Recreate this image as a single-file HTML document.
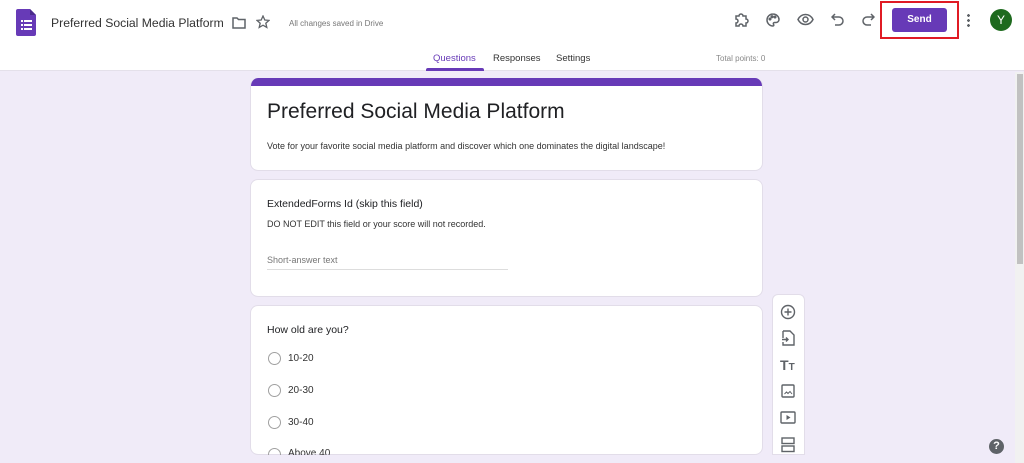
<!DOCTYPE html>
<html><head><style>
*{box-sizing:border-box;margin:0;padding:0}
body{width:1024px;height:463px;overflow:hidden;background:#f0ebf8;font-family:"Liberation Sans",sans-serif;position:relative;color:#202124}
.hdr{position:absolute;left:0;top:0;width:1024px;height:71px;background:#fff;border-bottom:1px solid #e4e0ea}
.abs{position:absolute}
.card{position:absolute;left:250px;width:513px;background:#fff;border-radius:8px;border:1px solid #e2dde9}
.ic{position:absolute;stroke:#5f6368;fill:none;stroke-width:1.8}
.radio{position:absolute;left:17px;width:13px;height:13px;border:1.5px solid #a0a0a0;border-radius:50%}
.opt{position:absolute;left:37px;font-size:10px;color:#333}
</style></head><body>
<div class="hdr">
 <svg class="abs" style="left:16px;top:9px" width="20" height="27" viewBox="0 0 20 27"><path d="M2 0H14L20 6V25a2 2 0 0 1-2 2H2a2 2 0 0 1-2-2V2a2 2 0 0 1 2-2z" fill="#673ab7"/><path d="M14 0V6H20z" fill="#4a2a8c"/><g fill="#fff"><rect x="5" y="11" width="2" height="2"/><rect x="8" y="11" width="8" height="2"/><rect x="5" y="15" width="2" height="2"/><rect x="8" y="15" width="8" height="2"/><rect x="5" y="19" width="2" height="2"/><rect x="8" y="19" width="8" height="2"/></g></svg>
 <div class="abs" style="left:51px;top:16px;font-size:12.2px;color:#333">Preferred Social Media Platform</div>
 <svg class="ic" style="left:232px;top:17px;stroke-width:1.5" width="14" height="12" viewBox="0 0 14 12"><path d="M1 1h4l1.5 1.5H13V11H1z"/></svg>
 <svg class="ic" style="left:256px;top:15px;stroke-width:1.3" width="14" height="14" viewBox="0 0 14 14"><path d="M7 1l1.8 4 4.2.4-3.2 2.8 1 4.2L7 10.2 3.2 12.4l1-4.2L1 5.4l4.2-.4z"/></svg>
 <div class="abs" style="left:289px;top:19px;font-size:8px;color:#777">All changes saved in Drive</div>
 <svg class="ic" style="left:733px;top:12px;stroke-width:1.5" width="16" height="16" viewBox="0 0 16 16"><path d="M3 4h3a2 2 0 0 1 4 0h3v3a2 2 0 0 1 0 4v3H10a2 2 0 0 0-4 0H3v-3a2 2 0 0 0 0-4z"/></svg>
 <svg class="ic" style="left:765px;top:12px;stroke-width:1.5" width="16" height="16" viewBox="0 0 16 16"><path d="M8 2a6 6 0 0 0 0 12c1 0 1-1 .5-1.7-.5-.8 0-1.8 1-1.8H11a3 3 0 0 0 3-3C14 4.5 11.3 2 8 2z"/><circle cx="5" cy="7" r=".8"/><circle cx="7" cy="4.7" r=".8"/><circle cx="10" cy="5" r=".8"/></svg>
 <svg class="ic" style="left:797px;top:13px;stroke-width:1.5" width="17" height="13" viewBox="0 0 17 13"><path d="M1 6.5C3 2.5 6 1.5 8.5 1.5s5.5 1 7.5 5c-2 4-5 5-7.5 5S3 10.5 1 6.5z"/><circle cx="8.5" cy="6.5" r="2.5"/></svg>
 <svg class="ic" style="left:831px;top:13px;stroke-width:1.5" width="13" height="13" viewBox="0 0 13 13"><path d="M4 1L1 4l3 3M1 4h7a4 4 0 0 1 0 8H4"/></svg>
 <svg class="ic" style="left:862px;top:13px;stroke-width:1.5" width="13" height="13" viewBox="0 0 13 13"><path d="M9 1l3 3-3 3M12 4H5a4 4 0 0 0 0 8h4"/></svg>
 <div class="abs" style="left:880px;top:1px;width:79px;height:38px;border:2px solid #e01b24"></div>
 <div class="abs" style="left:892px;top:8px;width:55px;height:24px;background:#673ab7;border-radius:3px;color:#fff;font-size:10px;font-weight:bold;text-align:center;line-height:24px">Send</div>
 <div class="abs" style="left:967px;top:13px;width:3px;height:14px;background:radial-gradient(circle,#5f6368 1.3px,transparent 1.5px) 0 0/3px 5px"></div>
 <div class="abs" style="left:990px;top:9px;width:22px;height:22px;border-radius:50%;background:#1e6a1e;color:#fff;font-size:12px;text-align:center;line-height:22px">Y</div>
 <div class="abs" style="left:433px;top:53px;font-size:9.5px;color:#673ab7">Questions</div>
 <div class="abs" style="left:426px;top:68px;width:58px;height:3px;background:#673ab7;border-radius:2px 2px 0 0"></div>
 <div class="abs" style="left:493px;top:53px;font-size:9.5px;color:#333">Responses</div>
 <div class="abs" style="left:556px;top:53px;font-size:9.5px;color:#333">Settings</div>
 <div class="abs" style="left:716px;top:54px;font-size:8px;color:#888">Total points: 0</div>
</div>
<div class="abs" style="left:1015px;top:72px;width:9px;height:391px;background:#f1f1f1"></div>
<div class="abs" style="left:1017px;top:74px;width:6px;height:190px;background:#c1c1c1"></div>
<div class="card" style="top:78px;height:93px;overflow:hidden;border-top:none">
 <div style="height:8px;background:#673ab7"></div>
 <div class="abs" style="left:16px;top:22px;font-size:21px;color:#202124">Preferred Social Media Platform</div>
 <div class="abs" style="left:16px;top:63px;font-size:9px;color:#333">Vote for your favorite social media platform and discover which one dominates the digital landscape!</div>
</div>
<div class="card" style="top:179px;height:118px">
 <div class="abs" style="left:16px;top:18px;font-size:10.5px;color:#202124">ExtendedForms Id (skip this field)</div>
 <div class="abs" style="left:16px;top:39px;font-size:9px;color:#333">DO NOT EDIT this field or your score will not recorded.</div>
 <div class="abs" style="left:16px;top:75px;font-size:9px;color:#777">Short-answer text</div>
 <div class="abs" style="left:16px;top:89px;width:241px;border-top:1px solid #ddd"></div>
</div>
<div class="card" style="top:305px;height:150px">
 <div class="abs" style="left:16px;top:18px;font-size:10.5px;color:#202124">How old are you?</div>
 <div class="radio" style="top:46px"></div><div class="opt" style="top:47px">10-20</div>
 <div class="radio" style="top:78px"></div><div class="opt" style="top:79px">20-30</div>
 <div class="radio" style="top:110px"></div><div class="opt" style="top:111px">30-40</div>
 <div style="position:absolute;left:0;top:138px;width:511px;height:11px;overflow:hidden"><div class="radio" style="top:4px"></div><div class="opt" style="top:4px">Above 40</div></div>
</div>
<div class="abs" style="left:772px;top:294px;width:33px;height:161px;background:#fff;border-radius:6px 6px 0 0;border:1px solid #e2dde9"></div>
<svg class="ic" style="left:780px;top:304px;stroke-width:1.4" width="16" height="16" viewBox="0 0 16 16"><circle cx="8" cy="8" r="6.5"/><path d="M8 4.5v7M4.5 8h7"/></svg>
<svg class="ic" style="left:782px;top:330px;stroke-width:1.4" width="13" height="16" viewBox="0 0 13 16"><path d="M1 1h7l4 4v10H1v-3M1 8v-7"/><path d="M0 9.5h6M4 7.5l2 2-2 2"/></svg>
<div class="abs" style="left:780px;top:357px;font-size:14px;font-weight:bold;color:#5f6368">T<span style="font-size:10px">T</span></div>
<svg class="ic" style="left:781px;top:384px;stroke-width:1.4" width="14" height="14" viewBox="0 0 14 14"><rect x="1" y="1" width="12" height="12" rx="1"/><path d="M3.5 10l2-2 1.5 1.5L9 7.5l2 2.5" stroke-width="1"/></svg>
<svg class="ic" style="left:780px;top:411px;stroke-width:1.4" width="16" height="13" viewBox="0 0 16 13"><rect x="1" y="1" width="14" height="11" rx="1"/><path d="M6.5 4v5l4-2.5z" fill="#5f6368" stroke="none"/></svg>
<svg class="ic" style="left:781px;top:437px;stroke-width:1.4" width="14" height="16" viewBox="0 0 14 16"><rect x="1" y="1" width="12" height="5.5"/><rect x="1" y="9" width="12" height="5.5"/></svg>
<div class="abs" style="left:989px;top:439px;width:15px;height:15px;border-radius:50%;background:#5f6368;color:#fff;font-size:11px;font-weight:bold;text-align:center;line-height:15px">?</div>
</body></html>
